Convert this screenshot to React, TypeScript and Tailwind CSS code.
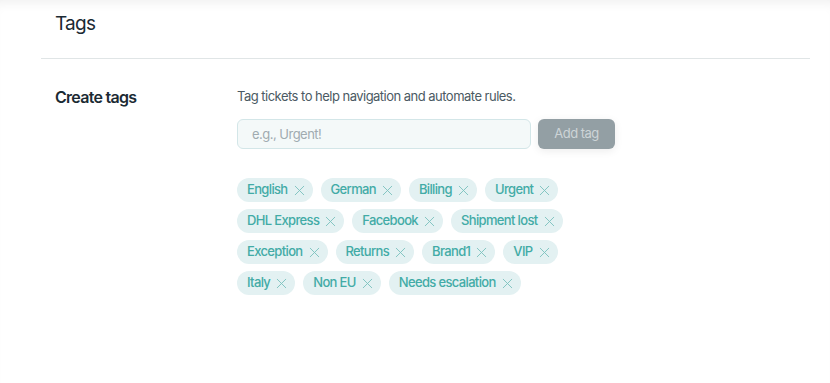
import { X } from "lucide-react"

const tags = [
  "English", "German", "Billing", "Urgent",
  "DHL Express", "Facebook", "Shipment lost",
  "Exception", "Returns", "Brand1", "VIP",
  "Italy", "Non EU", "Needs escalation",
]

const rows = [
  tags.slice(0, 4),
  tags.slice(4, 7),
  tags.slice(7, 11),
  tags.slice(11),
]

function Tag({ label }: { label: string }) {
  return (
    <span className="flex h-6 items-center gap-[3px] rounded-full bg-[#e3f1f2] pl-[10px] pr-[5px] text-[13px] font-medium tracking-[-0.05em] text-[#42aba6]">
      {label}
      <X className="h-[17px] w-[17px] text-[#7cc2bf]" strokeWidth={1.3} />
    </span>
  )
}

export default function App() {
  return (
    <div className="min-h-[383px] bg-white pl-[41px] pr-[20px] shadow-[inset_0_10px_12px_-8px_rgba(0,0,0,0.07)] font-['Inter',sans-serif] text-[#1b2a33]">
      <div className="flex h-[59px] items-start border-b border-[#e0e5e6] pl-[14px] pt-[11px]">
        <h1 className="text-[19px] font-normal leading-[26px] tracking-[-0.04em]">Tags</h1>
      </div>
      <div className="flex pl-[14px] pt-[27px]">
        <h2 className="w-[182px] text-[16px] font-semibold leading-[22px] tracking-[-0.045em]">Create tags</h2>
        <div className="flex flex-col pt-[1px]">
          <p className="text-[13px] leading-[18px] tracking-[-0.04em] text-[#4b5a63]">Tag tickets to help navigation and automate rules.</p>
          <div className="mt-[14px] flex gap-[7px]">
            <input
              placeholder="e.g., Urgent!"
              className="h-[30px] w-[294px] rounded-md border border-[#d3e6e8] bg-[#f4f9f9] px-[14px] text-[13px] tracking-[-0.04em] text-[#1b2a33] placeholder:text-[#a0abb0] outline-none"
            />
            <button className="h-[30px] w-[77px] rounded-md bg-[#939fa4] text-[13px] tracking-[-0.04em] text-[#cdd4d7] shadow-[0_2px_8px_rgba(0,0,0,0.08)]">
              Add tag
            </button>
          </div>
          <div className="mt-[29px] flex flex-col gap-[7px]">
            {rows.map((row, i) => (
              <div key={i} className="flex gap-[8px]">
                {row.map((t) => (
                  <Tag key={t} label={t} />
                ))}
              </div>
            ))}
          </div>
        </div>
      </div>
    </div>
  )
}
